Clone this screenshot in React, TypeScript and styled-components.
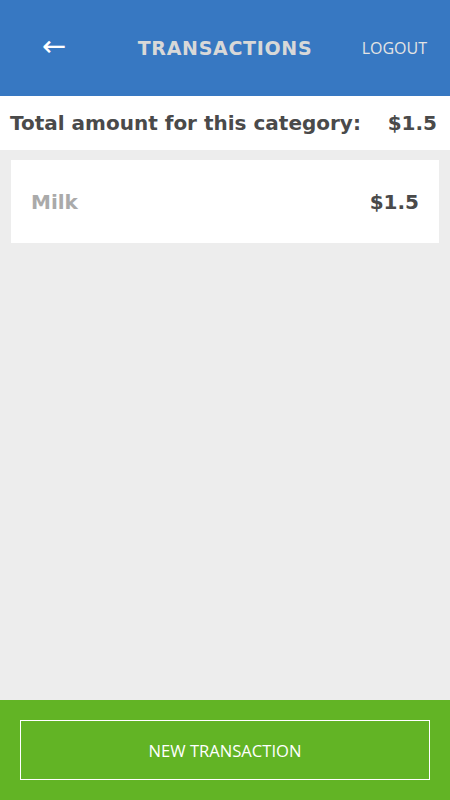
import React from "react";
import styled, { createGlobalStyle } from "styled-components";

const Global = createGlobalStyle`
  html, body { margin: 0; padding: 0; height: 100%; }
  body { background: #ededed; font-family: "DejaVu Sans", sans-serif; }
  #root { height: 100%; }
`;

const Page = styled.div`
  display: flex;
  flex-direction: column;
  height: 800px;
  width: 450px;
  background: #ededed;
`;

const Header = styled.header`
  height: 96px;
  background: #3778c2;
  display: grid;
  grid-template-columns: 110px 1fr 110px;
  align-items: center;
`;

const BackButton = styled.div`
  color: #ffffff;
  font-family: "DejaVu Sans", sans-serif;
  font-size: 29px;
  text-align: center;
  line-height: 1;
  padding-bottom: 4px;
  padding-right: 2px;
`;

const Title = styled.h1`
  margin: 0;
  text-align: center;
  color: #d8d8d8;
  font-family: "DejaVu Sans", sans-serif;
  font-weight: bold;
  font-size: 19px;
  letter-spacing: 0.7px;
`;

const Logout = styled.div`
  color: #e4e4e4;
  font-family: "Open Sans", sans-serif;
  font-size: 16px;
  text-align: right;
  padding-right: 23px;
`;

const TotalRow = styled.div`
  height: 54px;
  background: #ffffff;
  display: flex;
  align-items: center;
  justify-content: space-between;
  padding: 0 13px 0 10px;
  color: #4a4a4a;
  font-weight: bold;
  font-size: 20px;
`;

const List = styled.div`
  flex: 1;
  padding: 10px 11px;
`;

const Card = styled.div`
  height: 83px;
  background: #ffffff;
  display: flex;
  align-items: center;
  justify-content: space-between;
  padding: 0 20px;
  font-weight: bold;
  font-size: 20px;
`;

const Label = styled.span<{ $muted?: boolean }>`
  color: ${(p) => (p.$muted ? "#aaaaaa" : "#4a4a4a")};
`;

const Footer = styled.footer`
  height: 100px;
  background: #62b425;
  display: flex;
  padding: 20px;
  box-sizing: border-box;
`;

const NewButton = styled.button`
  flex: 1;
  background: transparent;
  border: 1px solid #ffffff;
  color: #ffffff;
  font-family: "Open Sans", sans-serif;
  font-size: 16.6px;
  cursor: pointer;
`;

export default function App() {
  return (
    <>
      <Global />
      <Page>
        <Header>
          <BackButton>←</BackButton>
          <Title>TRANSACTIONS</Title>
          <Logout>LOGOUT</Logout>
        </Header>
        <TotalRow>
          <span>Total amount for this category:</span>
          <span>$1.5</span>
        </TotalRow>
        <List>
          <Card>
            <Label $muted>Milk</Label>
            <Label>$1.5</Label>
          </Card>
        </List>
        <Footer>
          <NewButton>NEW TRANSACTION</NewButton>
        </Footer>
      </Page>
    </>
  );
}
